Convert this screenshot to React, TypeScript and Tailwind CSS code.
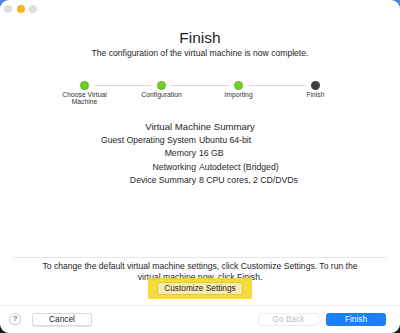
import React from "react"

const steps = [
    { label: ["Choose Virtual", "Machine"], done: true },
    { label: ["Configuration"], done: true },
    { label: ["Importing"], done: true },
    { label: ["Finish"], done: false },
]

const summary = [
    ["Guest Operating System", "Ubuntu 64-bit"],
    ["Memory", "16 GB"],
    ["Networking", "Autodetect (Bridged)"],
    ["Device Summary", "8 CPU cores, 2 CD/DVDs"],
]

export default function App() {
    return (
        <div className="w-[400px] h-[333px] bg-gradient-to-b from-[#4f84e0] via-[#8a9bb8] to-[#1a1a1a] font-['Liberation_Sans',Arial,sans-serif] text-[#262626]">
            <div className="w-full h-full bg-white rounded-[9px] flex flex-col overflow-hidden">
                {/* title bar */}
                <div className="flex gap-[4.5px] pl-[4px] pt-[4.5px] h-[12.5px]">
                    <span className="w-[8px] h-[8px] rounded-full bg-[#dddddd]" />
                    <span className="w-[8px] h-[8px] rounded-full bg-[#f6b321]" />
                    <span className="w-[8px] h-[8px] rounded-full bg-[#dddddd]" />
                </div>

                <h1 className="mt-[15px] text-center text-[15.5px] leading-[19px] text-[#1f1f1f]">Finish</h1>
                <p className="mt-[1px] text-center text-[8.6px] leading-[11px] text-[#262626]">
                    The configuration of the virtual machine is now complete.
                </p>

                {/* stepper */}
                <div className="mt-[22px] mx-auto w-[308px] relative">
                    <div className="absolute top-[4px] left-[38px] right-[38px] flex">
                        <div className="flex-1 mx-[10px] h-[1px] bg-[#d9d9d9]" />
                        <div className="flex-1 mx-[10px] h-[1px] bg-[#d9d9d9]" />
                        <div className="flex-1 mx-[10px] h-[1px] bg-[#d9d9d9]" />
                    </div>
                    <div className="grid grid-cols-4">
                        {steps.map((s) => (
                            <div key={s.label[0]} className="flex flex-col items-center">
                                <span
                                    className={
                                        s.done
                                            ? "w-[9px] h-[9px] rounded-full bg-[#72d122] border border-[#5fb316]"
                                            : "w-[9px] h-[9px] rounded-full bg-[#3f3f3f]"
                                    }
                                />
                                <div className="mt-[1.5px] text-center text-[6.8px] leading-[7px] text-[#333]">
                                    {s.label.map((l) => (
                                        <div key={l}>{l}</div>
                                    ))}
                                </div>
                            </div>
                        ))}
                    </div>
                </div>

                {/* summary */}
                <h2 className="mt-[15px] text-center text-[9.6px] leading-[13px] text-[#262626]">Virtual Machine Summary</h2>
                <div className="mt-[1px] grid grid-cols-[196px_1fr] gap-x-[3px] text-[8.7px] leading-[13.4px] text-[#262626]">
                    {summary.map(([k, v]) => (
                        <React.Fragment key={k}>
                            <span className="text-right">{k}</span>
                            <span>{v}</span>
                        </React.Fragment>
                    ))}
                </div>

                <div className="flex-1" />

                {/* notice */}
                <div className="mx-[13px] h-[1px] bg-[#e6e6e6]" />
                <p className="mt-[3px] px-[30px] text-center text-[8.6px] leading-[11px] text-[#262626]">
                    To change the default virtual machine settings, click Customize Settings. To run the virtual machine now, click Finish.
                </p>
                <div className="-mt-[5px] flex justify-center">
                    <div className="flex bg-[#f5d924]/90 px-[9px] py-[4px]">
                        <button className="w-[86px] h-[13px] rounded-[3px] bg-[#f7ecb0] border border-[#dcc848] text-[8.3px] leading-[11px] text-[#262626]">
                            Customize Settings
                        </button>
                    </div>
                </div>

                <div className="mt-[6px] h-[1px] bg-[#ececec]" />

                {/* footer */}
                <div className="h-[27px] flex items-center pl-[9px] pr-[14px] pb-[1px]">
                    <span className="w-[12px] h-[12px] rounded-full border border-[#d0d0d0] bg-white shadow-[0_0.5px_1px_rgba(0,0,0,0.15)] text-[8px] leading-[10px] text-center text-[#333]">?</span>
                    <button className="ml-[11px] w-[60px] h-[13px] rounded-[3px] bg-white border border-[#dadada] shadow-[0_0.5px_1px_rgba(0,0,0,0.1)] text-[8.3px] leading-[11px] text-[#262626]">
                        Cancel
                    </button>
                    <div className="flex-1" />
                    <button className="w-[61px] h-[13px] rounded-[3px] bg-white border border-[#ececec] text-[8.3px] leading-[11px] text-[#c0c0c0]">
                        Go Back
                    </button>
                    <button className="ml-[7px] w-[60px] h-[13px] rounded-[3px] bg-[#1b80f8] text-[8.3px] leading-[13px] text-white">
                        Finish
                    </button>
                </div>
            </div>
        </div>
    )
}
